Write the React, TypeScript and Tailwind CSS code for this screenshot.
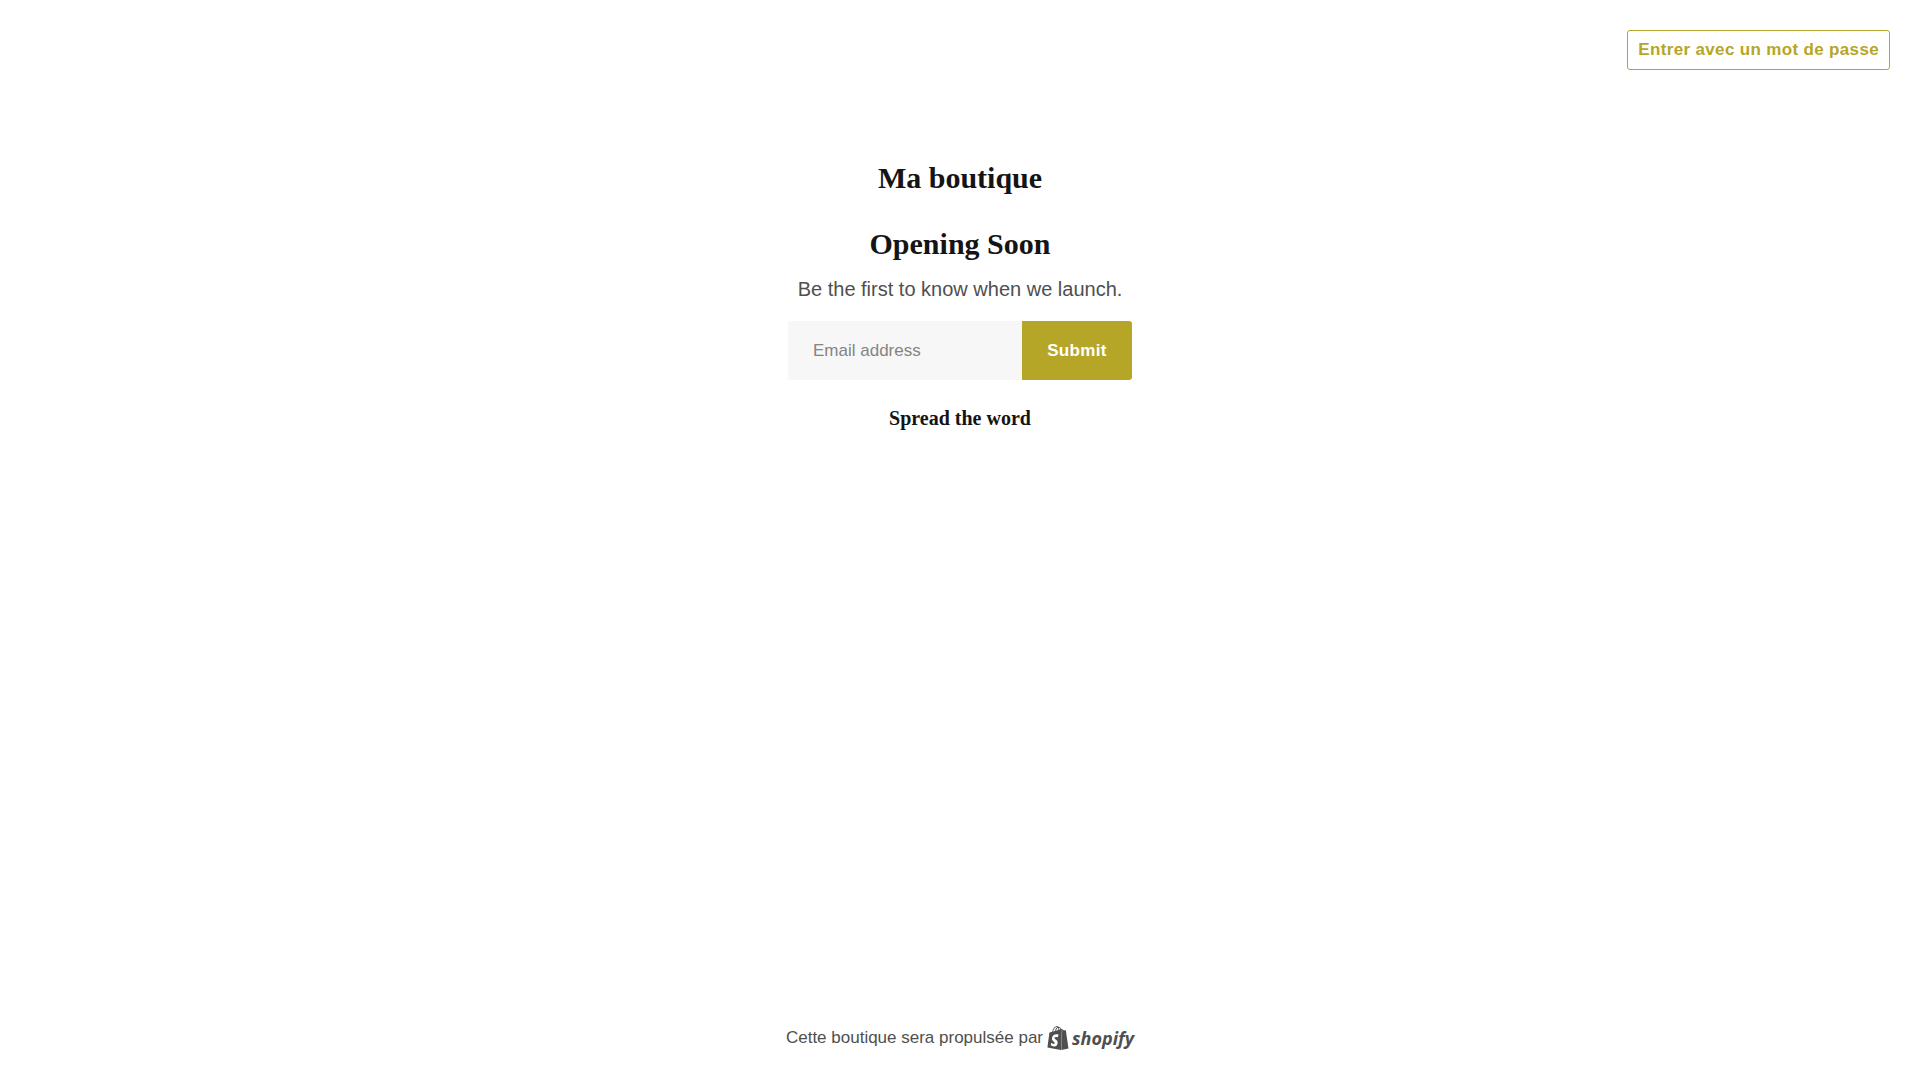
import { SiShopify } from "react-icons/si";

export default function App() {
  return (
    <div className="flex min-h-screen flex-col bg-white font-['Liberation_Sans',Arial,sans-serif] text-[17px] text-[#4f4f4f]">
      <header className="flex justify-end px-[30px] pt-[30px]">
        <button
          type="button"
          className="h-10 rounded-[3px] border border-[#b6a627] px-2.5 font-bold tracking-[0.02em] text-[#b6a627]"
        >
          Entrer avec un mot de passe
        </button>
      </header>

      <main className="flex flex-1 flex-col items-center pt-[90px] text-center">
        <h1 className="font-['Liberation_Serif',serif] text-[30px] leading-9 font-bold text-[#141414]">
          Ma boutique
        </h1>
        <h2 className="mt-[30px] font-['Liberation_Serif',serif] text-[30px] leading-9 font-bold text-[#141414]">
          Opening Soon
        </h2>
        <p className="mt-3 text-xl leading-[30px]">Be the first to know when we launch.</p>
        <form className="mt-[17px] flex w-[344px] max-w-full" onSubmit={(e) => e.preventDefault()}>
          <input
            type="email"
            aria-label="Email address"
            placeholder="Email address"
            className="h-[59px] min-w-0 flex-1 rounded-l-[3px] bg-[#f7f7f7] px-[25px] placeholder:text-[#848484]"
          />
          <button
            type="submit"
            className="h-[59px] w-[110px] rounded-r-[3px] bg-[#b6a627] font-bold tracking-[0.02em] text-white"
          >
            Submit
          </button>
        </form>
        <h3 className="mt-[26px] font-['Liberation_Serif',serif] text-xl leading-6 font-bold text-[#141414]">
          Spread the word
        </h3>
      </main>

      <footer className="flex items-center justify-center gap-[3px] pb-[30px] leading-6">
        <span>Cette boutique sera propulsée par</span>
        <a href="#shopify" aria-label="Shopify" className="flex items-center gap-0.5">
          <SiShopify className="size-6" />
          <span className="font-['Open_Sans',sans-serif] text-lg leading-6 font-bold italic">shopify</span>
        </a>
      </footer>
    </div>
  );
}
